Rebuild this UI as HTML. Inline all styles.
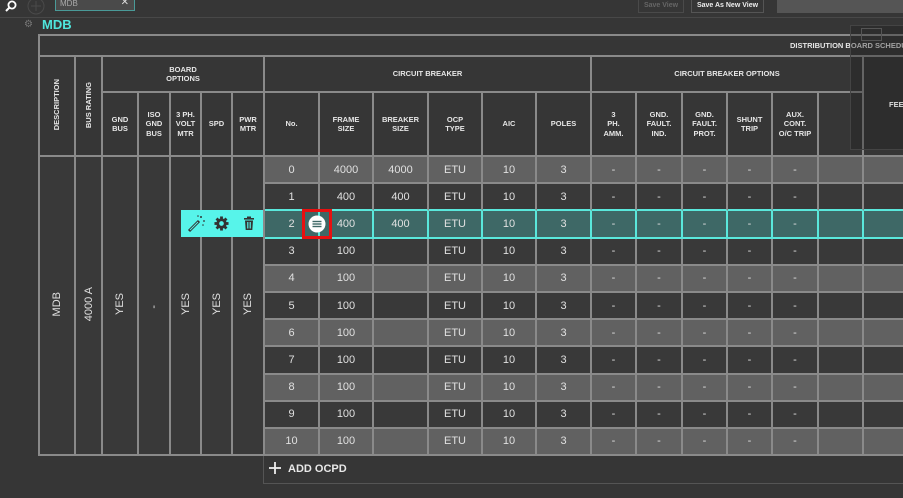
<!DOCTYPE html>
<html><head><meta charset="utf-8">
<style>
*{box-sizing:border-box;margin:0;padding:0}
body{width:903px;height:498px;overflow:hidden;background:#363636;font-family:"Liberation Sans",sans-serif;color:#e0e0e0;position:relative}
.abs{position:absolute}
table{position:absolute;left:38px;top:34px;border-collapse:separate;border-spacing:0;table-layout:fixed;width:884px;border-left:2px solid #8a8a8a;border-top:2px solid #8a8a8a}
td{border-right:2px solid #8a8a8a;border-bottom:2px solid #8a8a8a;text-align:center;vertical-align:middle;overflow:hidden;white-space:nowrap}
.h{font-weight:bold;font-size:7.5px;line-height:9.5px;color:#e6e6e6;white-space:normal}
.v{writing-mode:vertical-rl;transform:rotate(180deg);display:inline-block}
tr.b td{height:27.2px;font-size:11px;color:#e0e0e0}
tr.g td.r{background:#616161}
tr.d td.r{background:#393939}
tr.s td.r{background:#3e6866;border-color:#5ae8dc}
tr.pre td.r{border-bottom-color:#5ae8dc}
.dash{font-size:10px;color:#aaa}
.left{background:#393939;font-size:11px}
</style></head><body>
<div class="abs" style="left:0;top:17px;width:903px;height:1px;background:#484848"></div>
<svg class="abs" style="left:4px;top:0" width="14" height="14" viewBox="0 0 14 14"><circle cx="8" cy="5" r="3.6" fill="none" stroke="#fff" stroke-width="1.8"/><line x1="5.5" y1="7.5" x2="2" y2="11" stroke="#fff" stroke-width="2"/></svg>
<svg class="abs" style="left:27px;top:-3px" width="18" height="18" viewBox="0 0 18 18"><circle cx="9" cy="9" r="8" fill="none" stroke="#4a4a4a" stroke-width="1"/><line x1="9" y1="4" x2="9" y2="14" stroke="#4a4a4a"/><line x1="4" y1="9" x2="14" y2="9" stroke="#4a4a4a"/></svg>
<div class="abs" style="left:55px;top:-2px;width:80px;height:13px;border:1px solid #4a9a98;background:#4a4a4a;font-size:8px;color:#aaa;padding-left:4px;line-height:9px">MDB<span style="position:absolute;right:5px;top:-1px;color:#ddd;font-size:10px">✕</span></div>
<div class="abs" style="left:638px;top:-1px;width:46px;height:14px;border:1px solid #4a4a4a;font-size:7px;color:#666;text-align:center;line-height:12px;font-weight:bold">Save View</div>
<div class="abs" style="left:691px;top:-1px;width:73px;height:14px;border:1px solid #555;font-size:7px;color:#eee;text-align:center;line-height:12px;font-weight:bold">Save As New View</div>
<div class="abs" style="left:777px;top:-1px;width:126px;height:14px;background:#555"></div>
<div class="abs" style="left:24px;top:19px;font-size:10px;color:#777">⚙</div>
<div class="abs" style="left:42px;top:17px;font-size:13px;font-weight:bold;color:#4fe6dc">MDB</div>

<table>
<colgroup><col style="width:36px"><col style="width:27px"><col style="width:36px"><col style="width:32px"><col style="width:31px"><col style="width:31px"><col style="width:32px"><col style="width:55px"><col style="width:54px"><col style="width:55px"><col style="width:54px"><col style="width:54px"><col style="width:55px"><col style="width:45px"><col style="width:46px"><col style="width:45px"><col style="width:45px"><col style="width:46px"><col style="width:45px"><col style="width:60px"></colgroup>
<tr><td colspan="20" style="height:21px;text-align:left;padding-left:750px" class="h">DISTRIBUTION BOARD SCHEDULE</td></tr>
<tr><td rowspan="2" class="h"><span class="v">DESCRIPTION</span></td><td rowspan="2" class="h"><span class="v">BUS RATING</span></td><td colspan="5" class="h" style="height:36px">BOARD<br>OPTIONS</td><td colspan="6" class="h">CIRCUIT BREAKER</td><td colspan="6" class="h">CIRCUIT BREAKER OPTIONS</td><td rowspan="2" class="h"></td></tr>
<tr style="height:64px"><td class="h">GND<br>BUS</td><td class="h">ISO<br>GND<br>BUS</td><td class="h">3 PH.<br>VOLT<br>MTR</td><td class="h">SPD</td><td class="h">PWR<br>MTR</td><td class="h">No.</td><td class="h">FRAME<br>SIZE</td><td class="h">BREAKER<br>SIZE</td><td class="h">OCP<br>TYPE</td><td class="h">AIC</td><td class="h">POLES</td><td class="h">3<br>PH.<br>AMM.</td><td class="h">GND.<br>FAULT.<br>IND.</td><td class="h">GND.<br>FAULT.<br>PROT.</td><td class="h">SHUNT<br>TRIP</td><td class="h">AUX.<br>CONT.<br>O/C TRIP</td><td class="h"></td></tr>
<tr class="b g"><td rowspan="11" class="left"><span class="v">MDB</span></td><td rowspan="11" class="left"><span class="v">4000 A</span></td><td rowspan="11" class="left"><span class="v">YES</span></td><td rowspan="11" class="left"><span class="v">-</span></td><td rowspan="11" class="left"><span class="v">YES</span></td><td rowspan="11" class="left"><span class="v">YES</span></td><td rowspan="11" class="left"><span class="v">YES</span></td>
<td class="r">0</td><td class="r">4000</td><td class="r">4000</td><td class="r">ETU</td><td class="r">10</td><td class="r">3</td><td class="r dash">-</td><td class="r dash">-</td><td class="r dash">-</td><td class="r dash">-</td><td class="r dash">-</td><td class="r"></td><td class="r"></td></tr>
<tr class="b d pre"><td class="r">1</td><td class="r">400</td><td class="r">400</td><td class="r">ETU</td><td class="r">10</td><td class="r">3</td><td class="r dash">-</td><td class="r dash">-</td><td class="r dash">-</td><td class="r dash">-</td><td class="r dash">-</td><td class="r"></td><td class="r"></td></tr>
<tr class="b s"><td class="r">2</td><td class="r">400</td><td class="r">400</td><td class="r">ETU</td><td class="r">10</td><td class="r">3</td><td class="r dash">-</td><td class="r dash">-</td><td class="r dash">-</td><td class="r dash">-</td><td class="r dash">-</td><td class="r"></td><td class="r"></td></tr>
<tr class="b d"><td class="r">3</td><td class="r">100</td><td class="r"></td><td class="r">ETU</td><td class="r">10</td><td class="r">3</td><td class="r dash">-</td><td class="r dash">-</td><td class="r dash">-</td><td class="r dash">-</td><td class="r dash">-</td><td class="r"></td><td class="r"></td></tr>
<tr class="b g"><td class="r">4</td><td class="r">100</td><td class="r"></td><td class="r">ETU</td><td class="r">10</td><td class="r">3</td><td class="r dash">-</td><td class="r dash">-</td><td class="r dash">-</td><td class="r dash">-</td><td class="r dash">-</td><td class="r"></td><td class="r"></td></tr>
<tr class="b d"><td class="r">5</td><td class="r">100</td><td class="r"></td><td class="r">ETU</td><td class="r">10</td><td class="r">3</td><td class="r dash">-</td><td class="r dash">-</td><td class="r dash">-</td><td class="r dash">-</td><td class="r dash">-</td><td class="r"></td><td class="r"></td></tr>
<tr class="b g"><td class="r">6</td><td class="r">100</td><td class="r"></td><td class="r">ETU</td><td class="r">10</td><td class="r">3</td><td class="r dash">-</td><td class="r dash">-</td><td class="r dash">-</td><td class="r dash">-</td><td class="r dash">-</td><td class="r"></td><td class="r"></td></tr>
<tr class="b d"><td class="r">7</td><td class="r">100</td><td class="r"></td><td class="r">ETU</td><td class="r">10</td><td class="r">3</td><td class="r dash">-</td><td class="r dash">-</td><td class="r dash">-</td><td class="r dash">-</td><td class="r dash">-</td><td class="r"></td><td class="r"></td></tr>
<tr class="b g"><td class="r">8</td><td class="r">100</td><td class="r"></td><td class="r">ETU</td><td class="r">10</td><td class="r">3</td><td class="r dash">-</td><td class="r dash">-</td><td class="r dash">-</td><td class="r dash">-</td><td class="r dash">-</td><td class="r"></td><td class="r"></td></tr>
<tr class="b d"><td class="r">9</td><td class="r">100</td><td class="r"></td><td class="r">ETU</td><td class="r">10</td><td class="r">3</td><td class="r dash">-</td><td class="r dash">-</td><td class="r dash">-</td><td class="r dash">-</td><td class="r dash">-</td><td class="r"></td><td class="r"></td></tr>
<tr class="b g"><td class="r">10</td><td class="r">100</td><td class="r"></td><td class="r">ETU</td><td class="r">10</td><td class="r">3</td><td class="r dash">-</td><td class="r dash">-</td><td class="r dash">-</td><td class="r dash">-</td><td class="r dash">-</td><td class="r"></td><td class="r"></td></tr>
</table>

<div class="abs" style="left:263px;top:456px;width:660px;height:28px;border:1px solid #555;border-top:none;font-size:11px;font-weight:bold;color:#e8e8e8;line-height:26px;padding-left:24px">ADD OCPD</div>
<svg class="abs" style="left:268px;top:461px" width="14" height="14"><line x1="7" y1="1" x2="7" y2="13" stroke="#eee" stroke-width="1.8"/><line x1="1" y1="7" x2="13" y2="7" stroke="#eee" stroke-width="1.8"/></svg>

<div class="abs" style="left:181px;top:210px;width:82px;height:27px;background:#57f4ea"></div>
<svg class="abs" style="left:186px;top:214px" width="20" height="20" viewBox="0 0 20 20"><line x1="3" y1="17" x2="13" y2="7" stroke="#333" stroke-width="3"/><line x1="4" y1="16" x2="12" y2="8" stroke="#57f4ea" stroke-width="1"/><circle cx="15" cy="3" r="1" fill="#333"/><circle cx="18" cy="7" r="0.9" fill="#333"/><circle cx="12" cy="2" r="0.8" fill="#333"/><circle cx="17" cy="11" r="0.8" fill="#333"/></svg>
<svg class="abs" style="left:214px;top:216px" width="15" height="15" viewBox="0 0 16 16"><g fill="#333"><circle cx="8" cy="8" r="5.5"/><rect x="6.5" y="0.5" width="3" height="15"/><rect x="0.5" y="6.5" width="15" height="3"/><rect x="6.5" y="0.5" width="3" height="15" transform="rotate(45 8 8)"/><rect x="6.5" y="0.5" width="3" height="15" transform="rotate(-45 8 8)"/></g><circle cx="8" cy="8" r="2.5" fill="#57f4ea"/></svg>
<svg class="abs" style="left:243px;top:216px" width="12" height="15" viewBox="0 0 12 15"><rect x="1" y="2" width="10" height="1.6" fill="#333"/><rect x="4" y="0.5" width="4" height="1.5" fill="#333"/><path d="M2 4.5h8l-0.7 9.5h-6.6z" fill="#333"/><g stroke="#57f4ea" stroke-width="0.8"><line x1="4.5" y1="6" x2="4.5" y2="12.5"/><line x1="6" y1="6" x2="6" y2="12.5"/><line x1="7.5" y1="6" x2="7.5" y2="12.5"/></g></svg>

<div class="abs" style="left:302px;top:209px;width:30px;height:30px;border:3px solid #e81010"></div>
<svg class="abs" style="left:307px;top:214px" width="20" height="20" viewBox="0 0 20 20"><circle cx="10" cy="10" r="8.5" fill="#fff"/><g stroke="#3e6866" stroke-width="1.4"><line x1="5.5" y1="7.5" x2="14.5" y2="7.5"/><line x1="5.5" y1="10" x2="14.5" y2="10"/><line x1="5.5" y1="12.5" x2="14.5" y2="12.5"/></g></svg>

<div class="abs" style="left:850px;top:25px;width:60px;height:125px;background:rgba(30,30,30,0.35);border:1px solid #444"></div>
<div class="abs" style="left:861px;top:28px;width:21px;height:13px;border:1px solid #555"></div>
<div class="abs" style="left:889px;top:100px;font-size:7.5px;font-weight:bold;color:#ddd">FEEDER</div>
</body></html>
